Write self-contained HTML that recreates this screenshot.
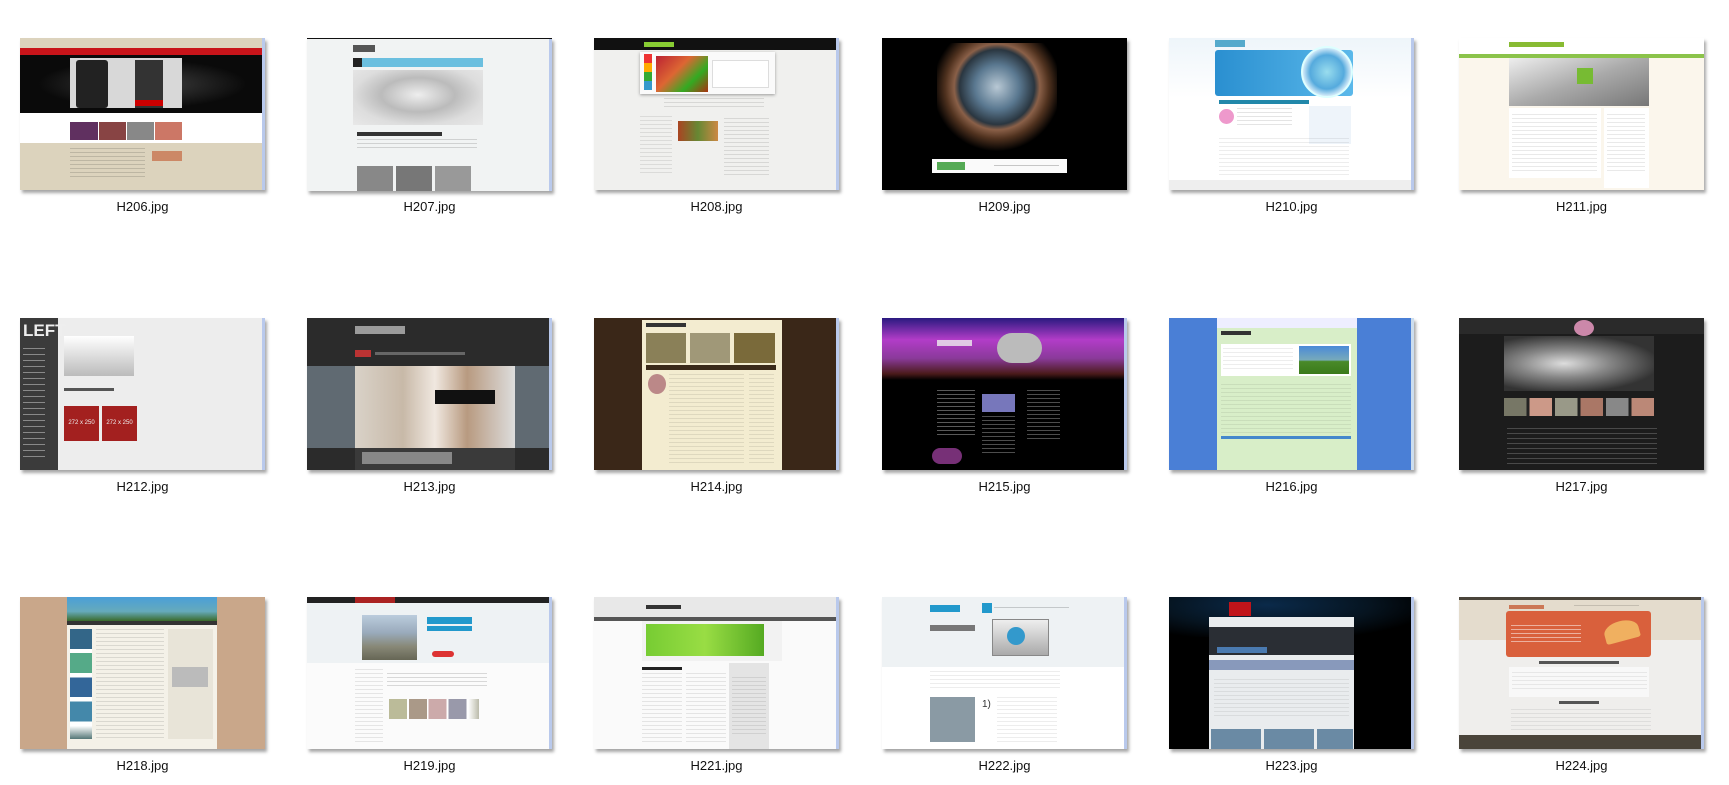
<!DOCTYPE html>
<html><head><meta charset="utf-8"><style>
html,body{margin:0;padding:0;background:#fff;width:1729px;height:785px;overflow:hidden;font-family:"Liberation Sans","Noto Sans CJK SC",sans-serif}
.t{position:absolute;width:245px;height:152px;overflow:hidden;box-shadow:2px 3px 3px rgba(0,0,0,.35)}
.t div{position:absolute}
.sb{right:0;top:0;width:3px;height:100%;background:#b9c9ec}
.l{position:absolute;width:245px;text-align:center;font-size:13px;color:#111}
.tx{background:repeating-linear-gradient(180deg,rgba(0,0,0,.35) 0 1px,transparent 1px 4px)}
</style></head><body>

<!-- Row 1 -->
<div class="t" style="left:20px;top:38px;background:#dcd3bd">
 <div style="left:0;top:10px;width:100%;height:7px;background:#c8141a"></div>
 <div style="left:0;top:17px;width:100%;height:58px;background:radial-gradient(ellipse at center,#444 0,#0a0a0a 60%)"></div>
 <div style="left:50px;top:20px;width:112px;height:50px;background:#d8d8d8"></div>
 <div style="left:56px;top:22px;width:32px;height:48px;background:#222;border-radius:3px"></div>
 <div style="left:115px;top:22px;width:28px;height:48px;background:#333"></div>
 <div style="left:115px;top:62px;width:28px;height:6px;background:#c00"></div>
 <div style="left:0;top:75px;width:100%;height:30px;background:#fff"></div>
 <div style="left:50px;top:84px;width:112px;height:18px;background:linear-gradient(90deg,#603060 25%,#fff 25% 26%,#844 26% 50%,#fff 50% 51%,#888 51% 75%,#fff 75% 76%,#c76 76%)"></div>
 <div class="tx" style="left:50px;top:110px;width:75px;height:30px;opacity:.4"></div>
 <div style="left:132px;top:113px;width:30px;height:10px;background:#c86"></div>
 <div class="sb"></div></div>
<div class="l" style="left:20px;top:199px">H206.jpg</div>

<div class="t" style="left:307px;top:38px;background:#f1f3f3;border-top:1px solid #111">
 <div style="left:46px;top:6px;width:22px;height:7px;background:#555"></div>
 <div style="left:46px;top:19px;width:130px;height:9px;background:#6bbfdf"></div>
 <div style="left:46px;top:19px;width:9px;height:9px;background:#222"></div>
 <div style="left:46px;top:31px;width:130px;height:55px;background:radial-gradient(ellipse at 50% 45%,#eee 0,#bbb 40%,#ddd 70%,#e8e8e8)"></div>
 <div style="left:50px;top:93px;width:85px;height:4px;background:#333"></div>
 <div class="tx" style="left:50px;top:100px;width:120px;height:12px;opacity:.4"></div>
 <div style="left:50px;top:127px;width:36px;height:25px;background:#888"></div>
 <div style="left:89px;top:127px;width:36px;height:25px;background:#777"></div>
 <div style="left:128px;top:127px;width:36px;height:25px;background:#999"></div>
 <div class="sb"></div></div>
<div class="l" style="left:307px;top:199px">H207.jpg</div>

<div class="t" style="left:594px;top:38px;background:#f0f0ee">
 <div style="left:0;top:0;width:100%;height:12px;background:#111"></div>
 <div style="left:50px;top:4px;width:30px;height:5px;background:#8c3"></div>
 <div style="left:46px;top:14px;width:135px;height:42px;background:#fafafa;box-shadow:0 1px 3px #999"></div>
 <div style="left:62px;top:18px;width:52px;height:36px;background:linear-gradient(135deg,#b23 0,#d63 40%,#3a2 70%,#a31)"></div>
 <div style="left:118px;top:22px;width:55px;height:26px;background:#fff;border:1px solid #ddd"></div>
 <div style="left:50px;top:16px;width:8px;height:36px;background:linear-gradient(#e33 0 25%,#fa0 25% 50%,#3a3 50% 75%,#39c 75%)"></div>
 <div class="tx" style="left:70px;top:60px;width:100px;height:12px;opacity:.3"></div>
 <div class="tx" style="left:46px;top:78px;width:32px;height:60px;opacity:.25"></div>
 <div style="left:84px;top:83px;width:40px;height:20px;background:linear-gradient(90deg,#a42,#683,#c84)"></div>
 <div class="tx" style="left:130px;top:80px;width:45px;height:60px;opacity:.3"></div>
 <div class="sb"></div></div>
<div class="l" style="left:594px;top:199px">H208.jpg</div>

<div class="t" style="left:882px;top:38px;background:#000">
 <div style="left:55px;top:5px;width:120px;height:110px;background:radial-gradient(circle at 50% 40%,#b8c8d4 0,#5a7890 25%,#2a3640 42%,#8a6048 48%,#50321f 58%,#000 72%)"></div>
 <div style="left:50px;top:121px;width:135px;height:14px;background:#fafafa"></div>
 <div style="left:55px;top:124px;width:28px;height:8px;background:#5a5"></div>
 <div class="tx" style="left:112px;top:127px;width:65px;height:3px;opacity:.6"></div>
</div>
<div class="l" style="left:882px;top:199px">H209.jpg</div>

<div class="t" style="left:1169px;top:38px;background:#fff">
 <div style="left:0;top:0;width:100%;height:60px;background:linear-gradient(#eef5fa,#fff)"></div>
 <div style="left:46px;top:2px;width:30px;height:7px;background:#5ac"></div>
 <div style="left:46px;top:12px;width:138px;height:46px;background:linear-gradient(90deg,#2a8fd0,#5ab8ea);border-radius:3px"></div>
 <div style="left:132px;top:8px;width:48px;height:48px;border-radius:50%;background:radial-gradient(circle,#9de 0,#5ad 50%,#cfe8f8 70%);border:2px solid #dff"></div>
 <div style="left:50px;top:62px;width:90px;height:4px;background:#28a"></div>
 <div style="left:50px;top:71px;width:15px;height:15px;border-radius:50%;background:#e9c"></div>
 <div class="tx" style="left:68px;top:70px;width:55px;height:20px;opacity:.3"></div>
 <div style="left:140px;top:68px;width:42px;height:38px;background:#eef4fa"></div>
 <div class="tx" style="left:50px;top:100px;width:130px;height:40px;opacity:.2"></div>
 <div style="left:0;top:142px;width:100%;height:10px;background:#eee"></div>
 <div class="sb"></div></div>
<div class="l" style="left:1169px;top:199px">H210.jpg</div>

<div class="t" style="left:1459px;top:38px;background:#fbf6ec">
 <div style="left:0;top:0;width:100%;height:16px;background:#fff"></div>
 <div style="left:50px;top:4px;width:55px;height:5px;background:#8b3"></div>
 <div style="left:0;top:16px;width:100%;height:4px;background:#8bc34a"></div>
 <div style="left:50px;top:20px;width:140px;height:48px;background:linear-gradient(160deg,#eee,#aaa 50%,#777)"></div>
 <div style="left:118px;top:30px;width:16px;height:16px;background:#7b3"></div>
 <div style="left:50px;top:70px;width:92px;height:70px;background:#fff"></div>
 <div class="tx" style="left:53px;top:76px;width:85px;height:60px;opacity:.25"></div>
 <div style="left:145px;top:70px;width:45px;height:80px;background:#fff"></div>
 <div class="tx" style="left:148px;top:76px;width:38px;height:60px;opacity:.25"></div>
</div>
<div class="l" style="left:1459px;top:199px">H211.jpg</div>

<!-- Row 2 -->
<div class="t" style="left:20px;top:318px;background:#ededed">
 <div style="left:0;top:0;width:38px;height:100%;background:#3b3b3b"></div>
 <div style="left:3px;top:4px;width:26px;height:18px;color:#eee;font-size:17px;font-weight:bold;line-height:18px">LEFT</div>
 <div class="tx" style="left:3px;top:30px;width:22px;height:110px;background:repeating-linear-gradient(180deg,rgba(255,255,255,.4) 0 1px,transparent 1px 6px)"></div>
 <div style="left:44px;top:18px;width:70px;height:40px;background:linear-gradient(#fff,#bbb)"></div>
 <div style="left:44px;top:70px;width:50px;height:3px;background:#555"></div>
 <div style="left:44px;top:88px;width:35px;height:35px;background:#a3201f;color:#eee;font-size:6px;text-align:center;line-height:35px">272 x 250</div>
 <div style="left:82px;top:88px;width:35px;height:35px;background:#a3201f;color:#eee;font-size:6px;text-align:center;line-height:35px">272 x 250</div>
 <div class="sb"></div></div>
<div class="l" style="left:20px;top:479px">H212.jpg</div>

<div class="t" style="left:307px;top:318px;background:#2b2b2b">
 <div style="left:48px;top:8px;width:50px;height:8px;background:#ccc;opacity:.7"></div>
 <div style="left:48px;top:32px;width:16px;height:7px;background:#b33"></div>
 <div class="tx" style="left:68px;top:34px;width:90px;height:3px;background:#666"></div>
 <div style="left:0;top:48px;width:100%;height:82px;background:#606a72"></div>
 <div style="left:48px;top:48px;width:160px;height:82px;background:linear-gradient(90deg,#d9d2c8,#c8b9a8 30%,#f0e8e0 50%,#b89a80 70%,#ddd)"></div>
 <div style="left:128px;top:72px;width:60px;height:14px;background:#111"></div>
 <div style="left:48px;top:130px;width:160px;height:22px;background:#3a3a3a"></div>
 <div style="left:55px;top:134px;width:90px;height:12px;background:#888"></div>
 <div class="sb"></div></div>
<div class="l" style="left:307px;top:479px">H213.jpg</div>

<div class="t" style="left:594px;top:318px;background:#3a2718">
 <div style="left:48px;top:2px;width:140px;height:150px;background:#f3ecd0"></div>
 <div style="left:52px;top:5px;width:40px;height:4px;background:#333"></div>
 <div style="left:52px;top:15px;width:40px;height:30px;background:#8a8058"></div>
 <div style="left:96px;top:15px;width:40px;height:30px;background:#a09878"></div>
 <div style="left:140px;top:15px;width:41px;height:30px;background:#7a6a3a"></div>
 <div style="left:52px;top:47px;width:130px;height:5px;background:#3a2a1a"></div>
 <div style="left:54px;top:56px;width:18px;height:20px;border-radius:50%;background:#b88"></div>
 <div class="tx" style="left:75px;top:56px;width:75px;height:90px;opacity:.25"></div>
 <div class="tx" style="left:155px;top:56px;width:25px;height:90px;opacity:.25"></div>
 <div class="sb"></div></div>
<div class="l" style="left:594px;top:479px">H214.jpg</div>

<div class="t" style="left:882px;top:318px;background:#000">
 <div style="left:0;top:0;width:100%;height:62px;background:linear-gradient(180deg,#2a1a80 0,#b23cc8 35%,#8a3a9a 65%,#4a1a1a 90%,#000)"></div>
 <div style="left:55px;top:22px;width:35px;height:6px;background:#eee;opacity:.8"></div>
 <div style="left:115px;top:15px;width:45px;height:30px;border-radius:15px;background:#bbb"></div>
 <div class="tx" style="left:55px;top:72px;width:38px;height:45px;background:repeating-linear-gradient(180deg,rgba(255,255,255,.35) 0 1px,transparent 1px 4px)"></div>
 <div style="left:100px;top:76px;width:33px;height:18px;background:#77b"></div>
 <div class="tx" style="left:100px;top:98px;width:33px;height:38px;background:repeating-linear-gradient(180deg,rgba(255,255,255,.3) 0 1px,transparent 1px 4px)"></div>
 <div class="tx" style="left:145px;top:72px;width:33px;height:50px;background:repeating-linear-gradient(180deg,rgba(255,255,255,.3) 0 1px,transparent 1px 4px)"></div>
 <div style="left:50px;top:130px;width:30px;height:16px;background:#a4a;border-radius:8px;opacity:.7"></div>
 <div class="sb"></div></div>
<div class="l" style="left:882px;top:479px">H215.jpg</div>

<div class="t" style="left:1169px;top:318px;background:#4a7fd6">
 <div style="left:48px;top:0;width:140px;height:152px;background:#d8eec8"></div>
 <div style="left:48px;top:0;width:140px;height:10px;background:#eef"></div>
 <div style="left:52px;top:13px;width:30px;height:4px;background:#333"></div>
 <div style="left:52px;top:26px;width:130px;height:32px;background:#fff"></div>
 <div style="left:130px;top:28px;width:50px;height:28px;background:linear-gradient(#4a8ad8,#7ab 50%,#4a8a2a 55%,#3a7a1a)"></div>
 <div class="tx" style="left:54px;top:30px;width:70px;height:24px;opacity:.2"></div>
 <div class="tx" style="left:52px;top:66px;width:130px;height:50px;opacity:.2"></div>
 <div style="left:52px;top:118px;width:130px;height:3px;background:#48c"></div>
 <div class="sb" style="background:#cde"></div></div>
<div class="l" style="left:1169px;top:479px">H216.jpg</div>

<div class="t" style="left:1459px;top:318px;background:#1c1c1c">
 <div style="left:0;top:0;width:100%;height:16px;background:#2a2a2a"></div>
 <div style="left:115px;top:2px;width:20px;height:16px;border-radius:50%;background:#c8a"></div>
 <div style="left:45px;top:18px;width:150px;height:55px;background:radial-gradient(ellipse at 40% 50%,#ddd 0,#888 35%,#333 75%)"></div>
 <div style="left:45px;top:80px;width:150px;height:18px;background:linear-gradient(90deg,#776 0 15%,#222 15% 17%,#c98 17% 32%,#222 32% 34%,#998 34% 49%,#222 49% 51%,#a76 51% 66%,#222 66% 68%,#888 68% 83%,#222 83% 85%,#b87 85%)"></div>
 <div class="tx" style="left:48px;top:110px;width:150px;height:38px;background:repeating-linear-gradient(180deg,rgba(255,255,255,.2) 0 1px,transparent 1px 5px)"></div>
</div>
<div class="l" style="left:1459px;top:479px">H217.jpg</div>

<!-- Row 3 -->
<div class="t" style="left:20px;top:597px;background:#c9a78a">
 <div style="left:47px;top:0;width:150px;height:152px;background:#f4f1e8"></div>
 <div style="left:47px;top:0;width:150px;height:24px;background:linear-gradient(#4a9fd8,#6ab 60%,#3a6a2a)"></div>
 <div style="left:47px;top:24px;width:150px;height:4px;background:#333"></div>
 <div style="left:50px;top:32px;width:22px;height:110px;background:linear-gradient(#368 0 18%,#fff 18% 22%,#5a8 22% 40%,#fff 40% 44%,#369 44% 62%,#fff 62% 66%,#48a 66% 84%,#fff 84% 88%,#577)"></div>
 <div class="tx" style="left:76px;top:32px;width:68px;height:110px;opacity:.3"></div>
 <div style="left:148px;top:32px;width:45px;height:110px;background:#e8e4d8"></div>
 <div style="left:152px;top:70px;width:36px;height:20px;background:#bbb"></div>
</div>
<div class="l" style="left:20px;top:758px">H218.jpg</div>

<div class="t" style="left:307px;top:597px;background:#fbfbfb">
 <div style="left:0;top:0;width:100%;height:6px;background:#222"></div>
 <div style="left:48px;top:0;width:40px;height:6px;background:#a22"></div>
 <div style="left:0;top:6px;width:100%;height:60px;background:#eef2f4"></div>
 <div style="left:55px;top:18px;width:55px;height:45px;background:linear-gradient(#bcd 0,#9ab 40%,#887 70%,#665)"></div>
 <div style="left:120px;top:20px;width:45px;height:7px;background:#29c"></div>
 <div style="left:120px;top:29px;width:45px;height:5px;background:#29c"></div>
 <div style="left:125px;top:54px;width:22px;height:6px;background:#d33;border-radius:3px"></div>
 <div class="tx" style="left:48px;top:72px;width:28px;height:75px;opacity:.25"></div>
 <div class="tx" style="left:80px;top:76px;width:100px;height:14px;opacity:.4"></div>
 <div style="left:82px;top:102px;width:90px;height:20px;background:linear-gradient(90deg,#bb9 0 20%,#fff 20% 22%,#a98 22% 42%,#fff 42% 44%,#caa 44% 64%,#fff 64% 66%,#99a 66% 86%,#fff 86% 88%,#bba)"></div>
 <div class="sb"></div></div>
<div class="l" style="left:307px;top:758px">H219.jpg</div>

<div class="t" style="left:594px;top:597px;background:#fafafa">
 <div style="left:0;top:0;width:100%;height:20px;background:#e8e8e8"></div>
 <div style="left:52px;top:8px;width:35px;height:4px;background:#333"></div>
 <div style="left:0;top:20px;width:100%;height:4px;background:#555"></div>
 <div style="left:48px;top:24px;width:140px;height:40px;background:#f2f2f2"></div>
 <div style="left:52px;top:27px;width:118px;height:32px;background:linear-gradient(90deg,#7c3,#9d4 50%,#5a2)"></div>
 <div style="left:48px;top:70px;width:40px;height:3px;background:#222"></div>
 <div class="tx" style="left:48px;top:76px;width:40px;height:70px;opacity:.25"></div>
 <div class="tx" style="left:92px;top:76px;width:40px;height:70px;opacity:.25"></div>
 <div style="left:135px;top:66px;width:40px;height:86px;background:#e4e4e4"></div>
 <div class="tx" style="left:138px;top:80px;width:34px;height:60px;opacity:.25"></div>
 <div class="sb"></div></div>
<div class="l" style="left:594px;top:758px">H221.jpg</div>

<div class="t" style="left:882px;top:597px;background:#fff">
 <div style="left:0;top:0;width:100%;height:70px;background:#eef2f4"></div>
 <div style="left:48px;top:8px;width:30px;height:7px;background:#29c"></div>
 <div style="left:100px;top:6px;width:10px;height:10px;background:#29c"></div>
 <div class="tx" style="left:112px;top:10px;width:75px;height:3px;opacity:.5"></div>
 <div style="left:48px;top:28px;width:45px;height:6px;background:#777"></div>
 <div style="left:110px;top:22px;width:55px;height:35px;background:linear-gradient(#eee,#aaa);border:1px solid #888"></div>
 <div style="left:125px;top:30px;width:18px;height:18px;border-radius:50%;background:#39c"></div>
 <div class="tx" style="left:48px;top:74px;width:130px;height:18px;opacity:.2"></div>
 <div style="left:48px;top:100px;width:45px;height:45px;background:#8a9aa4"></div>
 <div style="left:100px;top:102px;width:8px;height:30px;color:#333;font-size:10px">1)</div>
 <div class="tx" style="left:115px;top:100px;width:60px;height:45px;opacity:.2"></div>
 <div class="sb"></div></div>
<div class="l" style="left:882px;top:758px">H222.jpg</div>

<div class="t" style="left:1169px;top:597px;background:#000">
 <div style="left:0;top:0;width:100%;height:40px;background:radial-gradient(ellipse at 40% 20%,#0a2a4a 0,#061420 50%,#000 80%)"></div>
 <div style="left:60px;top:5px;width:22px;height:14px;background:#c1141a"></div>
 <div style="left:40px;top:20px;width:145px;height:132px;background:#e9ecee"></div>
 <div style="left:40px;top:30px;width:145px;height:28px;background:#2a2e34"></div>
 <div style="left:48px;top:50px;width:50px;height:6px;background:#4a7ab0"></div>
 <div style="left:40px;top:63px;width:145px;height:10px;background:#89b"></div>
 <div class="tx" style="left:45px;top:82px;width:135px;height:40px;opacity:.2"></div>
 <div style="left:42px;top:132px;width:50px;height:20px;background:#6a8aa4"></div>
 <div style="left:95px;top:132px;width:50px;height:20px;background:#6a8aa4"></div>
 <div style="left:148px;top:132px;width:36px;height:20px;background:#6a8aa4"></div>
 <div class="sb"></div></div>
<div class="l" style="left:1169px;top:758px">H223.jpg</div>

<div class="t" style="left:1459px;top:597px;background:#efeeec">
 <div style="left:0;top:0;width:100%;height:3px;background:#4a443a"></div>
 <div style="left:0;top:3px;width:100%;height:40px;background:#e4dccd"></div>
 <div style="left:50px;top:8px;width:35px;height:4px;background:#c75"></div>
 <div class="tx" style="left:115px;top:8px;width:65px;height:3px;opacity:.4"></div>
 <div style="left:47px;top:14px;width:145px;height:46px;background:#d9603c;border-radius:3px"></div>
 <div class="tx" style="left:52px;top:28px;width:70px;height:18px;background:repeating-linear-gradient(180deg,rgba(255,255,255,.5) 0 1px,transparent 1px 4px)"></div>
 <div style="left:145px;top:24px;width:35px;height:20px;background:#f0b060;border-radius:50% 50% 10% 10%;transform:rotate(-15deg)"></div>
 <div style="left:80px;top:64px;width:80px;height:3px;background:#555"></div>
 <div style="left:50px;top:70px;width:140px;height:30px;background:#f8f8f8"></div>
 <div class="tx" style="left:53px;top:75px;width:135px;height:20px;opacity:.2"></div>
 <div style="left:100px;top:104px;width:40px;height:3px;background:#555"></div>
 <div class="tx" style="left:52px;top:112px;width:140px;height:22px;opacity:.2"></div>
 <div style="left:0;top:138px;width:100%;height:14px;background:#4a443a"></div>
 <div class="sb"></div></div>
<div class="l" style="left:1459px;top:758px">H224.jpg</div>

</body></html>
